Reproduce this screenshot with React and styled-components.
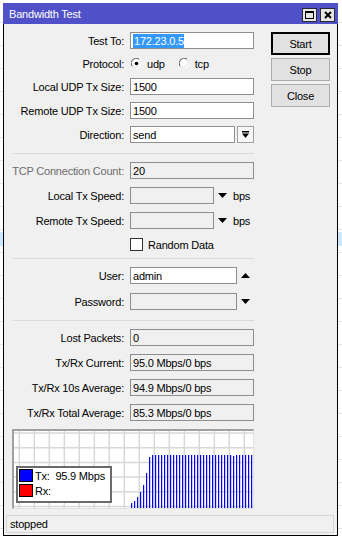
import React from 'react';
import styled, { createGlobalStyle } from 'styled-components';

const GlobalStyle = createGlobalStyle`
  html, body {
    margin: 0;
    padding: 0;
  }
  body {
    font-family: "Liberation Sans", Arial, sans-serif;
    font-size: 11px;
    letter-spacing: -0.2px;
    color: #000;
    background:
      linear-gradient(#cce8ff, #cce8ff) 0 232px / 100% 14px no-repeat,
      repeating-linear-gradient(to bottom, #fff 0 22px, #e4e4e4 22px 23px);
  }
`;

const Desktop = styled.div`
  width: 342px;
  height: 542px;
  box-sizing: border-box;
  padding: 3px 0 0 3px;
  overflow: hidden;
`;

const Window = styled.div`
  width: 335px;
  display: flex;
  flex-direction: column;
`;

const TitleBar = styled.div`
  height: 21px;
  background: #5051c9;
  color: #fff;
  display: flex;
  align-items: center;
  padding: 0 3px 0 6px;
`;

const Title = styled.span`
  flex: 1;
  font-size: 11px;
`;

const TitleButtons = styled.div`
  display: flex;
  gap: 3px;
  margin-top: 3px;
`;

const TitleButton = styled.div`
  width: 15px;
  height: 14px;
  box-sizing: border-box;
  border: 1px solid #2b2b2b;
  background: #e6e6e6;
  display: flex;
  align-items: center;
  justify-content: center;
`;

const Body = styled.div`
  background: #f0f0f0;
  border: 1px solid #000;
  border-top: none;
  padding: 8px 0 2px;
`;

const Main = styled.div`
  display: flex;
  align-items: flex-start;
`;

const FormColumn = styled.div`
  width: 260px;
  display: flex;
  flex-direction: column;
`;

const ButtonColumn = styled.div`
  margin-left: 7px;
  display: flex;
  flex-direction: column;
  gap: 3px;
`;

const Button = styled.div`
  width: 59px;
  height: 23px;
  box-sizing: border-box;
  background: #e1e1e1;
  border: 1px solid ${p => (p.$default ? '#000' : '#adadad')};
  box-shadow: ${p => (p.$default ? 'inset 0 0 0 1px #000' : 'none')};
  display: flex;
  align-items: center;
  justify-content: center;
  font-size: 11px;
`;

const Section = styled.div`
  display: flex;
  flex-direction: column;
  gap: ${p => p.$gap}px;
`;

const Divider = styled.div`
  height: 1px;
  width: 241px;
  background: #dadada;
  margin: ${p => p.$mt}px 0 8px 9px;
`;

const Row = styled.div`
  display: flex;
  align-items: center;
  height: ${p => p.$h || 17}px;
`;

const Label = styled.div`
  flex: 0 0 126px;
  box-sizing: border-box;
  padding-right: 6px;
  text-align: right;
  white-space: nowrap;
  color: ${p => (p.$disabled ? '#6d6d6d' : '#000')};
`;

const TextBox = styled.div`
  width: ${p => p.$w || 124}px;
  height: 17px;
  box-sizing: border-box;
  border: 1px solid #8e8e8e;
  background: ${p => (p.$readonly ? '#f0f0f0' : '#fff')};
  padding-left: 2px;
  display: flex;
  align-items: center;
  white-space: nowrap;
  overflow: hidden;
`;

const Selected = styled.span`
  background: #3399ff;
  color: #fff;
  line-height: 14px;
  padding: 0 0 0 1px;
`;

const DropButton = styled.div`
  width: 17px;
  height: 17px;
  margin-left: 2px;
  box-sizing: border-box;
  border: 1px solid #a0a0a0;
  background: #f7f7f7;
  display: flex;
  align-items: center;
  justify-content: center;
`;

const Arrow = styled.svg`
  margin-left: 4px;
  flex: 0 0 auto;
`;

const Unit = styled.span`
  margin-left: 6px;
`;

const RadioGroup = styled.div`
  display: flex;
  align-items: center;
`;

const RadioOption = styled.label`
  display: flex;
  align-items: center;
  margin-left: ${p => p.$ml}px;
  svg {
    margin-right: 5px;
  }
`;

const Checkbox = styled.div`
  width: 13px;
  height: 13px;
  box-sizing: border-box;
  border: 1px solid #333;
  background: #fff;
  margin-right: 5px;
`;

const Graph = styled.div`
  position: relative;
  width: 242px;
  height: 80px;
  box-sizing: border-box;
  margin: 8px 0 0 8px;
  background: #fff;
  border-top: 2px solid #a0a0a0;
  border-left: 2px solid #a0a0a0;
  border-right: 1px solid #e3e3e3;
  border-bottom: 1px solid #e3e3e3;
  svg {
    display: block;
  }
`;

const Legend = styled.div`
  position: absolute;
  left: 2px;
  top: 35px;
  width: 96px;
  height: 37px;
  box-sizing: border-box;
  border: 2px solid #6a6a6a;
  background: #fff;
  padding: 1px 0 0 1px;
  display: flex;
  flex-direction: column;
  gap: 2px;
`;

const LegendRow = styled.div`
  display: flex;
  align-items: center;
  white-space: pre;
  font-size: 11px;
`;

const Swatch = styled.div`
  width: 14px;
  height: 13px;
  box-sizing: border-box;
  border: 1px solid #000;
  background: ${p => p.$color};
  margin-right: 2px;
`;

const StatusBar = styled.div`
  margin: 6px 3px 0 2px;
  height: 18px;
  box-sizing: border-box;
  border: 1px solid #d6d6d6;
  padding-left: 3px;
  display: flex;
  align-items: center;
`;

const Radio = ({ checked }) => (
  <svg width="11" height="11" viewBox="0 0 11 11">
    <circle cx="5.5" cy="5.5" r="5" fill="#fff" />
    <path d="M1.2 8.2 A5 5 0 0 1 8.2 1.2" fill="none" stroke="#555" strokeWidth="1" />
    <path d="M8.2 1.2 A5 5 0 0 1 1.2 8.2" fill="none" stroke="#e0e0e0" strokeWidth="1" />
    {checked && <circle cx="5.5" cy="5.5" r="1.8" fill="#000" />}
  </svg>
);

const TriDown = () => (
  <Arrow width="9" height="5" viewBox="0 0 9 5">
    <polygon points="0,0 9,0 4.5,5" fill="#000" />
  </Arrow>
);

const TriUp = () => (
  <Arrow width="9" height="5" viewBox="0 0 9 5">
    <polygon points="0,5 9,5 4.5,0" fill="#000" />
  </Arrow>
);

const barHeights = [5, 7, 11, 16, 23, 35, 51].concat(
  Array.from({ length: 34 }, (_, i) => (i === 27 ? 52 : 53))
);

function Chart() {
  const w = 239;
  const h = 77;
  const vLines = Array.from({ length: 16 }, (_, k) => 5.3 + 15 * k);
  const hLines = Array.from({ length: 6 }, (_, k) => 2 + 14.7 * k);
  return (
    <svg width={w} height={h} viewBox={`0 0 ${w} ${h}`}>
      {vLines.map(x => (
        <line key={'v' + x} x1={x} y1="0" x2={x} y2={h} stroke="#d8d8d8" strokeWidth="1.5" />
      ))}
      {hLines.map(y => (
        <line key={'h' + y} x1="0" y1={y} x2={w} y2={y} stroke="#d8d8d8" strokeWidth="1.5" />
      ))}
      {barHeights.map((bh, i) => (
        <rect key={i} x={117 + i * 3} y={77 - bh} width="1.2" height={bh} fill="#0000ff" />
      ))}
    </svg>
  );
}

function App() {
  return (
    <>
      <GlobalStyle />
      <Desktop>
        <Window>
          <TitleBar>
            <Title>Bandwidth Test</Title>
            <TitleButtons>
              <TitleButton>
                <svg width="9" height="8" viewBox="0 0 9 8">
                  <rect x="0.5" y="1" width="8" height="6.5" fill="none" stroke="#000" strokeWidth="1" />
                  <rect x="0" y="0" width="9" height="2" fill="#000" />
                </svg>
              </TitleButton>
              <TitleButton>
                <svg width="8" height="8" viewBox="0 0 8 8">
                  <path d="M1 1 L7 7 M7 1 L1 7" stroke="#000" strokeWidth="2" />
                </svg>
              </TitleButton>
            </TitleButtons>
          </TitleBar>
          <Body>
            <Main>
              <FormColumn>
                <Section $gap={7}>
                  <Row>
                    <Label>Test To:</Label>
                    <TextBox>
                      <Selected>172.23.0.5</Selected>
                    </TextBox>
                  </Row>
                  <Row $h={15}>
                    <Label>Protocol:</Label>
                    <RadioGroup>
                      <RadioOption $ml={1}>
                        <Radio checked />
                        udp
                      </RadioOption>
                      <RadioOption $ml={14}>
                        <Radio />
                        tcp
                      </RadioOption>
                    </RadioGroup>
                  </Row>
                  <Row>
                    <Label>Local UDP Tx Size:</Label>
                    <TextBox>1500</TextBox>
                  </Row>
                  <Row>
                    <Label>Remote UDP Tx Size:</Label>
                    <TextBox>1500</TextBox>
                  </Row>
                  <Row>
                    <Label>Direction:</Label>
                    <TextBox $w={105}>send</TextBox>
                    <DropButton>
                      <svg width="7" height="7" viewBox="0 0 7 7">
                        <rect x="0" y="0" width="7" height="1.5" fill="#000" />
                        <polygon points="0,2.5 7,2.5 3.5,7" fill="#000" />
                      </svg>
                    </DropButton>
                  </Row>
                </Section>
                <Divider $mt={10} />
                <Section $gap={8}>
                  <Row>
                    <Label $disabled>TCP Connection Count:</Label>
                    <TextBox $readonly>20</TextBox>
                  </Row>
                  <Row>
                    <Label>Local Tx Speed:</Label>
                    <TextBox $w={84} $readonly />
                    <TriDown />
                    <Unit>bps</Unit>
                  </Row>
                  <Row>
                    <Label>Remote Tx Speed:</Label>
                    <TextBox $w={84} $readonly />
                    <TriDown />
                    <Unit>bps</Unit>
                  </Row>
                  <Row $h={15}>
                    <Label />
                    <Checkbox />
                    Random Data
                  </Row>
                </Section>
                <Divider $mt={6} />
                <Section $gap={9}>
                  <Row>
                    <Label>User:</Label>
                    <TextBox $w={107}>admin</TextBox>
                    <TriUp />
                  </Row>
                  <Row>
                    <Label>Password:</Label>
                    <TextBox $w={107} $readonly />
                    <TriDown />
                  </Row>
                </Section>
                <Divider $mt={10} />
                <Section $gap={8}>
                  <Row>
                    <Label>Lost Packets:</Label>
                    <TextBox $readonly>0</TextBox>
                  </Row>
                  <Row>
                    <Label>Tx/Rx Current:</Label>
                    <TextBox $readonly>95.0 Mbps/0 bps</TextBox>
                  </Row>
                  <Row>
                    <Label>Tx/Rx 10s Average:</Label>
                    <TextBox $readonly>94.9 Mbps/0 bps</TextBox>
                  </Row>
                  <Row>
                    <Label>Tx/Rx Total Average:</Label>
                    <TextBox $readonly>85.3 Mbps/0 bps</TextBox>
                  </Row>
                </Section>
              </FormColumn>
              <ButtonColumn>
                <Button $default>Start</Button>
                <Button>Stop</Button>
                <Button>Close</Button>
              </ButtonColumn>
            </Main>
            <Graph>
              <Chart />
              <Legend>
                <LegendRow>
                  <Swatch $color="#0000ff" />
                  {'Tx:  95.9 Mbps'}
                </LegendRow>
                <LegendRow>
                  <Swatch $color="#ff0000" />
                  Rx:
                </LegendRow>
              </Legend>
            </Graph>
            <StatusBar>stopped</StatusBar>
          </Body>
        </Window>
      </Desktop>
    </>
  );
}

export default App;
